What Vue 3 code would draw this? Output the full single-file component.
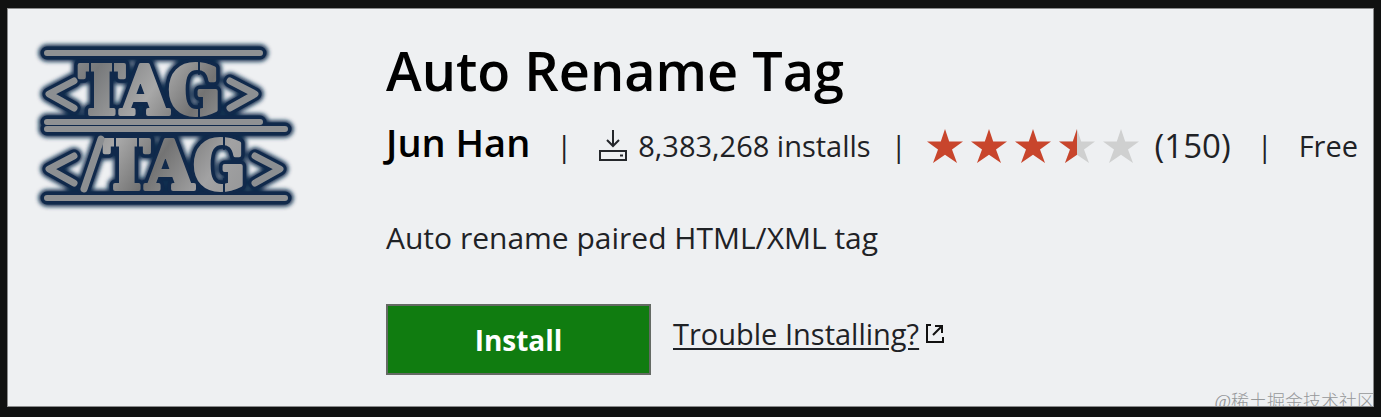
<script setup>
import { ref } from 'vue'

const extension = ref({
    name: 'Auto Rename Tag',
    publisher: 'Jun Han',
    installs: 8383268,
    ratings: 150,
    price: 'Free',
    description: 'Auto rename paired HTML/XML tag',
})

const stars = ['full', 'full', 'full', 'half', 'empty']

const starPath = 'M18 0 L22.2 12.6 L36 12.6 L25 20.6 L30 34 L18 25.8 L6 34 L11 20.6 L0 12.6 L13.8 12.6 Z'
const halfPath = 'M18 0 L18 25.8 L6 34 L11 20.6 L0 12.6 L13.8 12.6 Z'
</script>

<template>
    <main class="page">
        <section class="panel">

            <!-- Logo -->
            <svg class="logo" viewBox="0 0 264 176" role="img" aria-label="Auto Rename Tag logo">
                <defs>
                    <linearGradient id="metal" x1="0" y1="0" x2="264" y2="176" gradientUnits="userSpaceOnUse">
                        <stop offset="0" stop-color="#a3a7aa" />
                        <stop offset="0.22" stop-color="#77797b" />
                        <stop offset="0.4" stop-color="#a8a8a8" />
                        <stop offset="0.54" stop-color="#737373" />
                        <stop offset="0.7" stop-color="#a2a2a3" />
                        <stop offset="1" stop-color="#858789" />
                    </linearGradient>
                    <filter id="glow" x="-10%" y="-10%" width="120%" height="120%">
                        <feGaussianBlur stdDeviation="2" />
                    </filter>
                    <g id="bars">
                        <path d="M13 15H226M13 84H226M13 91H251M13 160H251" />
                    </g>
                    <g id="brackets">
                        <path d="M40 43L15 56L40 70M196 43L221 56L196 70" />
                        <path d="M40 118L15 131L40 145M221 118L246 131L221 145M67 101L50 151" />
                    </g>
                    <g id="words">
                        <text x="45" y="76">TAG</text>
                        <text x="70" y="151">TAG</text>
                    </g>
                    <!-- Stencil gaps cut into one word -->
                    <g id="gaps">
                        <path d="M56 22V42M79 22V42M165 22V36M165 66V80" />
                    </g>
                </defs>
                <g class="logo-edge" filter="url(#glow)">
                    <use href="#bars" class="edge-bar" />
                    <use href="#brackets" class="edge-bracket" />
                    <use href="#words" class="edge-word" />
                </g>
                <g class="logo-edge">
                    <use href="#bars" class="line-bar" />
                    <use href="#brackets" class="line-bracket" />
                    <use href="#words" class="line-word" />
                </g>
                <use href="#words" class="face-word" />
                <use href="#gaps" class="gap" />
                <use href="#gaps" x="25" y="75" class="gap" />
                <use href="#bars" class="face-bar" />
                <use href="#brackets" class="face-bracket" />
            </svg>

            <div class="details">
                <h1 class="name">{{ extension.name }}</h1>

                <!-- Publisher, installs, rating, price -->
                <div class="meta">
                    <span class="publisher">{{ extension.publisher }}</span>
                    <span class="divider">|</span>
                    <span class="installs">
                        <svg class="ico-download" viewBox="0 0 30 32" aria-hidden="true">
                            <path d="M15 0V16M9 10L15 16L21 10" />
                            <path d="M2 21H28V30H2Z" />
                            <path d="M22 25.5H25" />
                        </svg>
                        {{ extension.installs.toLocaleString('en-US') }} installs
                    </span>
                    <span class="divider divider--tight">|</span>
                    <span class="rating">
                        <span class="stars" role="img" aria-label="3.5 out of 5 stars">
                            <svg v-for="(star, i) in stars" :key="i" class="star" viewBox="0 0 36 34">
                                <path :d="starPath" :class="star === 'full' ? 'star-on' : 'star-off'" />
                                <path v-if="star === 'half'" :d="halfPath" class="star-on" />
                            </svg>
                        </span>
                        <span class="count">({{ extension.ratings }})</span>
                    </span>
                    <span class="divider">|</span>
                    <span class="price">{{ extension.price }}</span>
                </div>

                <p class="description">{{ extension.description }}</p>

                <!-- Actions -->
                <div class="actions">
                    <button class="btn-install" type="button">Install</button>
                    <a class="help" href="#">
                        <span class="help-text">Trouble Installing?</span>
                        <svg class="ico-external" viewBox="0 0 18 20" aria-hidden="true">
                            <path d="M5 1H1V18H17V13" />
                            <path d="M7 11L15 3M9 2H16V9" />
                        </svg>
                    </a>
                </div>
            </div>

            <span class="watermark">@稀土掘金技术社区</span>
        </section>
    </main>
</template>

<style>
body {
    margin: 0;
    background: #101111;
}
</style>

<style scoped>
.page {
    box-sizing: border-box;
    min-height: 100vh;
    padding: 8px 7px 10px;
    display: flex;
    background: #101111;
    font-family: "Open Sans", "Noto Sans", sans-serif;
    color: #1f2226;
}

.panel {
    position: relative;
    box-sizing: border-box;
    flex: 1;
    min-width: 0;
    display: flex;
    align-items: flex-start;
    gap: 88px;
    padding: 29px 16px 30px 26px;
    background: #eef0f2;
    border: 1px solid #8a8b8c;
    overflow: hidden;
}

/* Logo */
.logo {
    flex: none;
    width: 264px;
    height: 176px;
    fill: none;
    stroke-linecap: round;
    stroke-linejoin: round;
    font-family: "DejaVu Serif Condensed", "DejaVu Serif", serif;
    font-size: 68px;
    font-weight: 700;
}

.logo-edge    { stroke: #10294b; }
.edge-bar     { stroke-width: 17px; }
.edge-bracket { stroke-width: 17px; }
.edge-word    { stroke-width: 15px; }
.line-bar     { stroke-width: 13px; }
.line-bracket { stroke-width: 13px; }
.line-word    { stroke-width: 11px; }
.face-bar     { stroke: #8f9193; stroke-width: 6px; }
.face-bracket { stroke: #8c8f92; stroke-width: 7px; }
.face-word    { fill: url(#metal); stroke: url(#metal); stroke-width: 4px; }
.gap          { stroke: #10294b; stroke-width: 2px; }

.details {
    flex: 1;
    min-width: 0;
}

.name {
    margin: 0;
    font-size: 54px;
    line-height: 64px;
    font-weight: 600;
    color: #000;
}

.meta {
    display: flex;
    align-items: center;
    margin-top: 20px;
    white-space: nowrap;
    font-size: 29px;
    line-height: 48px;
}

.publisher {
    padding-bottom: 8px;
    font-size: 38px;
    line-height: 40px;
    font-weight: 600;
    color: #000;
}

.divider        { margin: 0 26px; }
.divider--tight { margin: 0 20px; }

.installs,
.rating {
    display: flex;
    align-items: center;
    gap: 10px;
}

.rating { gap: 16px; }

.ico-download {
    width: 30px;
    height: 32px;
    fill: none;
    stroke: #24272b;
    stroke-width: 2px;
}

.stars {
    display: flex;
    gap: 8px;
}

.star {
    width: 36px;
    height: 34px;
}

.star-on  { fill: #c8452c; }
.star-off { fill: #cfd0d0; }

.count { font-size: 33px; }

.description {
    margin: 48px 0 46px;
    font-size: 30px;
    line-height: 40px;
}

/* Actions */
.actions {
    display: flex;
    align-items: flex-start;
    gap: 22px;
}

.btn-install {
    width: 265px;
    height: 71px;
    padding: 0;
    border: 2px solid #646a64;
    background: #107c10;
    color: #fff;
    font-family: inherit;
    font-size: 28px;
    font-weight: 700;
    cursor: pointer;
}

.help {
    display: flex;
    align-items: center;
    gap: 7px;
    padding-top: 10px;
    color: #1f2226;
    font-size: 29px;
    line-height: 40px;
    text-decoration: none;
}

.help-text {
    text-decoration: underline;
    text-decoration-thickness: 2px;
    text-underline-offset: 3px;
}

.ico-external {
    width: 18px;
    height: 20px;
    fill: none;
    stroke: #111;
    stroke-width: 2px;
}

.watermark {
    position: absolute;
    right: -2px;
    bottom: -8px;
    font-family: "Liberation Serif", "Noto Sans CJK SC", sans-serif;
    font-size: 18px;
    line-height: 24px;
    font-weight: 300;
    color: #96989a;
}
</style>
